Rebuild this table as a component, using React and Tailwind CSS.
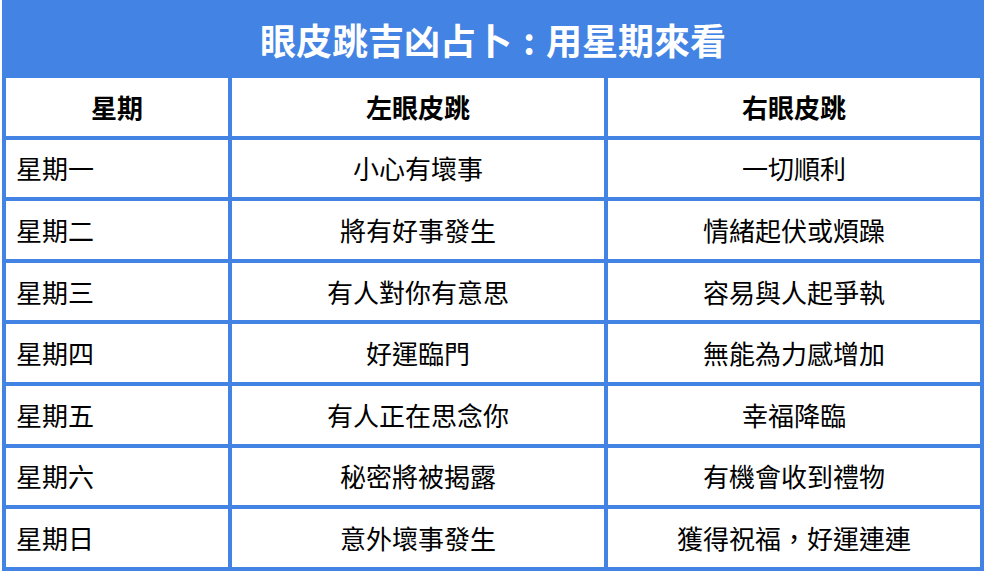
const rows = [
  ["星期一", "小心有壞事", "一切順利"],
  ["星期二", "將有好事發生", "情緒起伏或煩躁"],
  ["星期三", "有人對你有意思", "容易與人起爭執"],
  ["星期四", "好運臨門", "無能為力感增加"],
  ["星期五", "有人正在思念你", "幸福降臨"],
  ["星期六", "秘密將被揭露", "有機會收到禮物"],
  ["星期日", "意外壞事發生", "獲得祝福，好運連連"],
];

function Cell({ children, bold, left }) {
  return (
    <div
      className={`h-[57.6px] bg-white flex items-center text-[26px] leading-none text-black ${
        left ? "justify-start pl-[10px]" : "justify-center"
      } ${bold ? "font-bold" : "font-normal"}`}
    >
      {children}
    </div>
  );
}

export default function App() {
  return (
    <div
      className="w-[986px] h-[572px] bg-white pl-[2px]"
      style={{ fontFamily: '"Noto Sans CJK TC", "Noto Sans", sans-serif' }}
    >
      <div className="w-[982px] bg-[#4283e3] grid grid-cols-[222px_372px_372px] gap-[4px] px-[4px] pb-[4px]">
        <div className="col-span-3 h-[74px] flex items-center justify-center text-white text-[36px] font-bold leading-none pt-[4px]">
          <span>眼皮跳吉凶占卜</span>
          <span className="inline-block w-[34px] text-center">:</span>
          <span>用星期來看</span>
        </div>
        <Cell bold>星期</Cell>
        <Cell bold>左眼皮跳</Cell>
        <Cell bold>右眼皮跳</Cell>
        {rows.map((r) => (
          <>
            <Cell left key={r[0]}>{r[0]}</Cell>
            <Cell key={r[0] + "l"}>{r[1]}</Cell>
            <Cell key={r[0] + "r"}>{r[2]}</Cell>
          </>
        ))}
      </div>
    </div>
  );
}
